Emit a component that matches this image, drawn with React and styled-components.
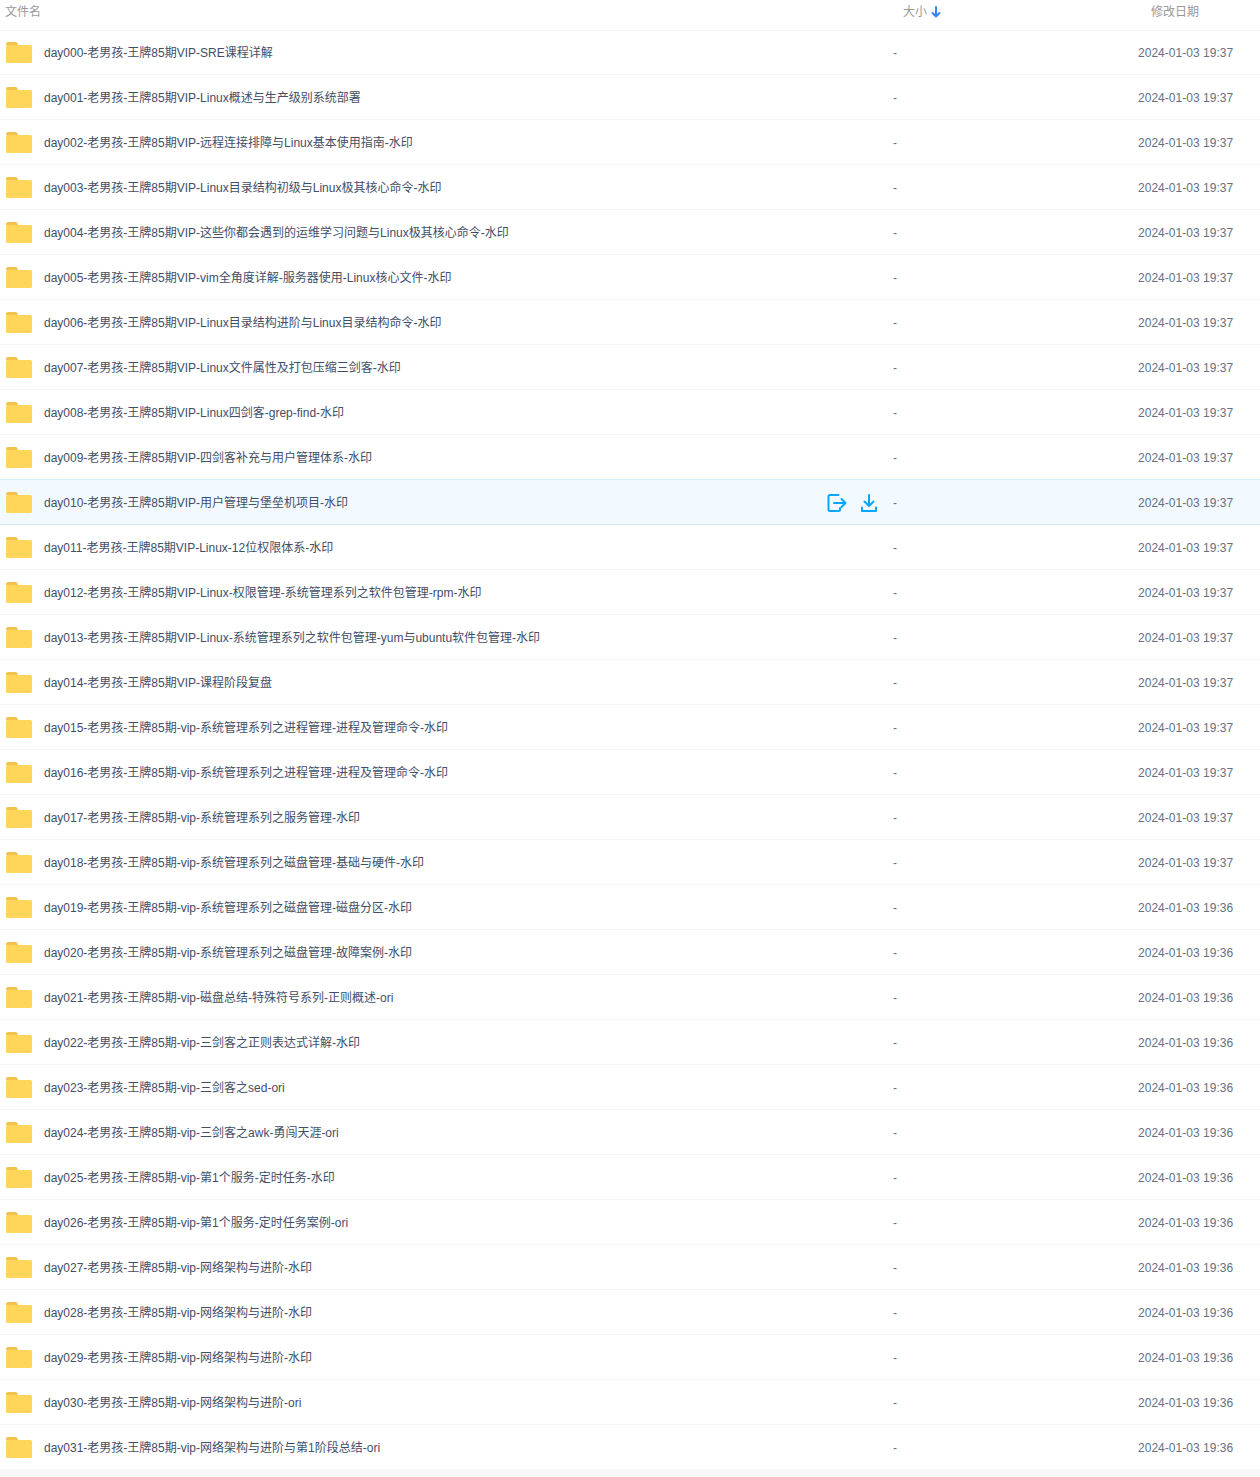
import React from 'react';
import styled, { createGlobalStyle } from 'styled-components';

const Global = createGlobalStyle`
  html, body { margin: 0; padding: 0; background: #f7f7f7; }
  body { font-family: "Liberation Sans", "Noto Sans CJK SC", sans-serif; line-height: 20px; }
`;

const Table = styled.div`
  width: 1260px;
  height: 1469px;
  background: #fff;
  overflow: hidden;
`;
const grid = `
  display: grid;
  grid-template-columns: 893px 1fr 122px;
  align-items: center;
`;
const Header = styled.div`
  ${grid}
  position: relative;
  height: 26px;
  padding-bottom: 4px;
  border-bottom: 1px solid #f4f5f7;
  box-sizing: content-box;
  margin: -1px 0 0;
  transform: translateY(1px);
  font-size: 12px;
  color: #999;
`;
const HeadName = styled.div`
  padding-left: 5px;
  margin-top: -2px;
`;
const HeadSize = styled.div`
  display: flex;
  align-items: center;
  gap: 4px;
  padding-left: 10px;
  margin-top: -2px;
`;
const HeadDate = styled.div`
  padding-left: 13px;
  margin-top: -2px;
`;
const Row = styled.div`
  ${grid}
  height: 42px;
  padding-top: 2px;
  border-bottom: 1px solid ${p => (p.$active ? '#cde9fb' : '#f4f5f7')};
  background: ${p => (p.$active ? '#f2faff' : '#fff')};
  font-size: 12px;
  color: #424e67;
  ${p => p.$active && 'box-shadow: 0 -1px 0 #d9eefb;'}
`;
const NameCell = styled.div`
  display: flex;
  align-items: center;
  min-width: 0;
  padding-left: 6px;
`;
const FolderBox = styled.svg`
  width: 26px;
  height: 22px;
  flex: none;
  margin-right: 12px;
`;
const Name = styled.span`
  white-space: nowrap;
  flex: 1;
`;
const Actions = styled.div`
  display: flex;
  align-items: center;
  gap: 12px;
  margin-right: 14px;
`;
const ActionIcon = styled.svg`
  width: 20px;
  height: 20px;
  display: block;
  fill: none;
  stroke: #06a7ff;
  stroke-width: 2;
  stroke-linecap: round;
  stroke-linejoin: round;
`;
const SizeCell = styled.div`
  color: #666f83;
`;
const DateCell = styled.div`
  color: #666f83;
  white-space: nowrap;
  letter-spacing: 0.03px;
`;

const names = [
  'day000-老男孩-王牌85期VIP-SRE课程详解',
  'day001-老男孩-王牌85期VIP-Linux概述与生产级别系统部署',
  'day002-老男孩-王牌85期VIP-远程连接排障与Linux基本使用指南-水印',
  'day003-老男孩-王牌85期VIP-Linux目录结构初级与Linux极其核心命令-水印',
  'day004-老男孩-王牌85期VIP-这些你都会遇到的运维学习问题与Linux极其核心命令-水印',
  'day005-老男孩-王牌85期VIP-vim全角度详解-服务器使用-Linux核心文件-水印',
  'day006-老男孩-王牌85期VIP-Linux目录结构进阶与Linux目录结构命令-水印',
  'day007-老男孩-王牌85期VIP-Linux文件属性及打包压缩三剑客-水印',
  'day008-老男孩-王牌85期VIP-Linux四剑客-grep-find-水印',
  'day009-老男孩-王牌85期VIP-四剑客补充与用户管理体系-水印',
  'day010-老男孩-王牌85期VIP-用户管理与堡垒机项目-水印',
  'day011-老男孩-王牌85期VIP-Linux-12位权限体系-水印',
  'day012-老男孩-王牌85期VIP-Linux-权限管理-系统管理系列之软件包管理-rpm-水印',
  'day013-老男孩-王牌85期VIP-Linux-系统管理系列之软件包管理-yum与ubuntu软件包管理-水印',
  'day014-老男孩-王牌85期VIP-课程阶段复盘',
  'day015-老男孩-王牌85期-vip-系统管理系列之进程管理-进程及管理命令-水印',
  'day016-老男孩-王牌85期-vip-系统管理系列之进程管理-进程及管理命令-水印',
  'day017-老男孩-王牌85期-vip-系统管理系列之服务管理-水印',
  'day018-老男孩-王牌85期-vip-系统管理系列之磁盘管理-基础与硬件-水印',
  'day019-老男孩-王牌85期-vip-系统管理系列之磁盘管理-磁盘分区-水印',
  'day020-老男孩-王牌85期-vip-系统管理系列之磁盘管理-故障案例-水印',
  'day021-老男孩-王牌85期-vip-磁盘总结-特殊符号系列-正则概述-ori',
  'day022-老男孩-王牌85期-vip-三剑客之正则表达式详解-水印',
  'day023-老男孩-王牌85期-vip-三剑客之sed-ori',
  'day024-老男孩-王牌85期-vip-三剑客之awk-勇闯天涯-ori',
  'day025-老男孩-王牌85期-vip-第1个服务-定时任务-水印',
  'day026-老男孩-王牌85期-vip-第1个服务-定时任务案例-ori',
  'day027-老男孩-王牌85期-vip-网络架构与进阶-水印',
  'day028-老男孩-王牌85期-vip-网络架构与进阶-水印',
  'day029-老男孩-王牌85期-vip-网络架构与进阶-水印',
  'day030-老男孩-王牌85期-vip-网络架构与进阶-ori',
  'day031-老男孩-王牌85期-vip-网络架构与进阶与第1阶段总结-ori',
];

const Folder = () => (
  <FolderBox viewBox="0 0 26 22">
    <path d="M0 2a2 2 0 0 1 2-2h7.5a2 2 0 0 1 1.8 1.1L12 3H0z" fill="#f2c14e" />
    <rect x="0" y="3" width="26" height="18" rx="1.5" fill="#ffd659" />
  </FolderBox>
);

const ArrowDown = () => (
  <svg width="10" height="12" viewBox="0 0 10 12" fill="none" stroke="#3b82f6" strokeWidth="2" strokeLinecap="round" strokeLinejoin="round">
    <path d="M5 1v9.5M1.5 7L5 10.5 8.5 7" />
  </svg>
);

const Share = () => (
  <ActionIcon viewBox="0 0 20 20">
    <path d="M11.5 2H3a1.5 1.5 0 0 0-1.5 1.5v13A1.5 1.5 0 0 0 3 18h8.5a1.5 1.5 0 0 0 1.5-1.5V15" />
    <path d="M7 10h11.5M14.5 6l4 4-4 4" />
  </ActionIcon>
);

const Download = () => (
  <ActionIcon viewBox="0 0 20 20">
    <path d="M10 2v10.5M5.5 8.5l4.5 4.5 4.5-4.5" />
    <path d="M3 14.5V18h14v-3.5" />
  </ActionIcon>
);

export default function App() {
  return (
    <>
      <Global />
      <Table>
        <Header>
          <HeadName>文件名</HeadName>
          <HeadSize>大小<ArrowDown /></HeadSize>
          <HeadDate>修改日期</HeadDate>
        </Header>
        {names.map((n, i) => (
          <Row key={n + i} $active={i === 10}>
            <NameCell>
              <Folder />
              <Name>{n}</Name>
              {i === 10 && (
                <Actions>
                  <Share />
                  <Download />
                </Actions>
              )}
            </NameCell>
            <SizeCell>-</SizeCell>
            <DateCell>2024-01-03 19:{i <= 18 ? '37' : '36'}</DateCell>
          </Row>
        ))}
      </Table>
    </>
  );
}
